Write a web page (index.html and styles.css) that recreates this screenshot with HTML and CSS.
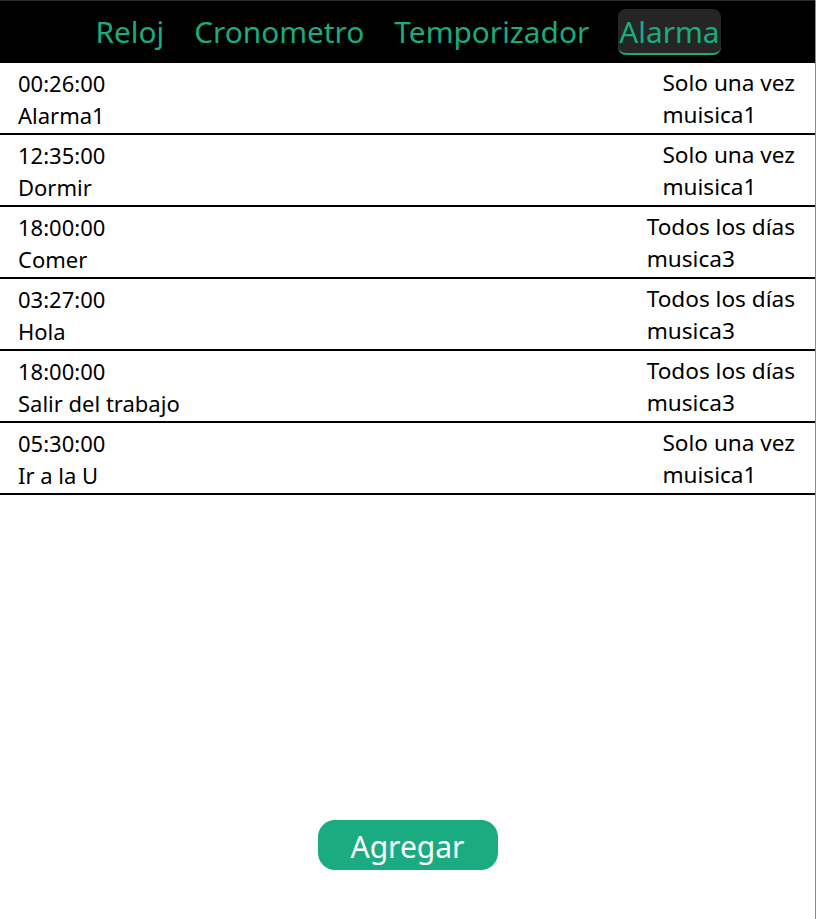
FILE: index.html
```html
<!DOCTYPE html>
<html lang="es">
<head>
<meta charset="utf-8">
<title>Alarma</title>
<link rel="stylesheet" href="styles.css">
</head>
<body>
<div class="app">
  <nav class="tabs">
    <span class="tab">Reloj</span>
    <span class="tab">Cronometro</span>
    <span class="tab">Temporizador</span>
    <span class="tab active">Alarma</span>
  </nav>
  <ul class="list">
    <li class="row"><div class="left"><div>00:26:00</div><div>Alarma1</div></div><div class="right"><div>Solo una vez</div><div>muisica1</div></div></li>
    <li class="row"><div class="left"><div>12:35:00</div><div>Dormir</div></div><div class="right"><div>Solo una vez</div><div>muisica1</div></div></li>
    <li class="row"><div class="left"><div>18:00:00</div><div>Comer</div></div><div class="right"><div>Todos los días</div><div>musica3</div></div></li>
    <li class="row"><div class="left"><div>03:27:00</div><div>Hola</div></div><div class="right"><div>Todos los días</div><div>musica3</div></div></li>
    <li class="row"><div class="left"><div>18:00:00</div><div>Salir del trabajo</div></div><div class="right"><div>Todos los días</div><div>musica3</div></div></li>
    <li class="row"><div class="left"><div>05:30:00</div><div>Ir a la U</div></div><div class="right"><div>Solo una vez</div><div>muisica1</div></div></li>
  </ul>
  <div class="actions">
    <button class="add">Agregar</button>
  </div>
</div>
</body>
</html>
```
FILE: styles.css
```css
* { box-sizing: border-box; }
html, body { margin: 0; padding: 0; background: #fff; }
body { font-family: "Noto Sans", "Open Sans", sans-serif; }
.app {
  min-height: 919px;
  width: 816px;
  border-right: 1px solid #8a8a8a;
  display: flex;
  flex-direction: column;
}
.tabs {
  background: #000;
  border-top: 1px solid #2b2b2b;
  height: 63px;
  display: flex;
  justify-content: center;
  align-items: center;
  gap: 28px;
  padding-bottom: 1px;
}
.tab {
  color: #1aab7f;
  font-size: 29.8px;
  line-height: 40px;
  padding: 3px 1px 1px;
  border-radius: 8px;
  border-bottom: 2px solid transparent;
}
.tab.active {
  background: #252525;
  border-bottom-color: #1aab7f;
}
.list { list-style: none; margin: 0; padding: 0; }
.row {
  display: flex;
  justify-content: space-between;
  padding: 4px 20px 2px 18px;
  border-bottom: 2px solid #000;
  font-size: 22px;
  line-height: 32px;
  color: #000;
}
.right { font-size: 22.6px; }
.actions {
  margin-top: auto;
  display: flex;
  justify-content: center;
  padding-bottom: 49px;
}
.add {
  width: 180px;
  height: 50px;
  border: none;
  border-radius: 17px;
  background: #1bab80;
  color: #fff;
  font-family: inherit;
  font-size: 30px;
  line-height: 50px;
  padding: 2px 0 0;
}
```
